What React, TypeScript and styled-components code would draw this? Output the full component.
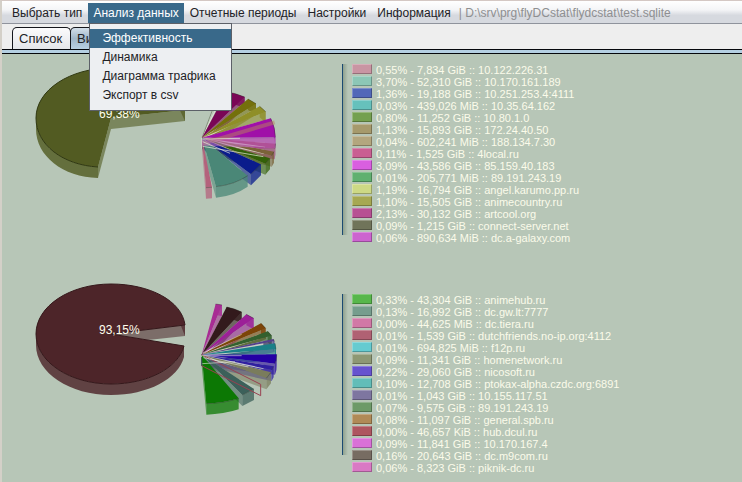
import React from "react";
import styled, { createGlobalStyle } from "styled-components";

const GlobalStyle = createGlobalStyle`
  * { box-sizing: border-box; }
  html, body, #root { height: 100%; }
  body {
    margin: 0;
    background: #b7c6b7;
    font-family: "Liberation Sans", Arial, sans-serif;
    font-size: 12px;
    color: #222226;
    overflow: hidden;
  }
  button { font: inherit; color: inherit; border: 0; background: none; }
`;

const Window = styled.div`
  display: flex;
  flex-direction: column;
  min-height: 100%;
  border-left: 2px solid #d4d0c8;
  border-top: 1px solid #d4c8c4;
`;

const MenuBar = styled.nav`
  display: flex;
  align-items: stretch;
  gap: 1px;
  height: 23px;
  padding: 2px 5px 0;
  background: linear-gradient(#ffffff 0%, #f4f5f7 40%, #d6d9df 65%, #d6d9df 100%);
  border-bottom: 1px solid #8f939c;
`;

const MenuSlot = styled.div`
  position: relative;
  display: flex;
`;

const MenuButton = styled.button<{ $open?: boolean }>`
  padding: 0 5px;
  line-height: 20px;
  white-space: nowrap;
  background: ${(p) => (p.$open ? "#39698a" : "transparent")};
  color: ${(p) => (p.$open ? "#ffffff" : "inherit")};
`;

const FilePath = styled.span`
  padding-left: 2px;
  line-height: 20px;
  color: #8e8f91;
  white-space: nowrap;
`;

const Popup = styled.div`
  position: absolute;
  z-index: 2;
  top: 100%;
  left: 1px;
  display: flex;
  flex-direction: column;
  width: 143px;
  padding: 5px 0;
  background: #edeff2;
  border: 1px solid #5c6068;
`;

const PopupItem = styled.button<{ $active?: boolean }>`
  height: 19px;
  padding: 0 12px;
  line-height: 19px;
  text-align: left;
  white-space: nowrap;
  background: ${(p) => (p.$active ? "#39698a" : "transparent")};
  color: ${(p) => (p.$active ? "#ffffff" : "inherit")};
`;

const TabStrip = styled.div`
  display: flex;
  align-items: flex-end;
  height: 25px;
  padding-left: 10px;
  background: #eeeeee;
`;

const Tab = styled.button<{ $selected?: boolean }>`
  height: 22px;
  min-width: 59px;
  padding: 0 6px;
  font-size: 13px;
  line-height: 21px;
  text-align: left;
  border: 1px solid #14161c;
  border-bottom: 0;
  border-radius: 5px 5px 0 0;
  background: ${(p) =>
    p.$selected ? "linear-gradient(#d3dfea, #9fb6ca 50%, #b9d0e2)" : "linear-gradient(#fbfbfc, #e4e6ea)"};

  & + & { margin-left: -1px; min-width: 110px; }
`;

const TabRule = styled.div`
  height: 5px;
  background: #b4cfe2;
  border-top: 1px solid #05070c;
  border-bottom: 1px solid #05070c;
`;

const Report = styled.main`
  display: flex;
  flex-direction: column;
  gap: 46px;
  padding-top: 10px;
`;

const ChartRow = styled.section`
  display: flex;
  align-items: flex-start;
  height: 184px;
`;

const ChartArea = styled.div`
  flex: 0 0 340px;

  svg { overflow: visible; }
`;

const LegendRule = styled.div<{ $short?: boolean }>`
  flex: 0 0 6px;
  height: ${(p) => (p.$short ? 161 : 171)}px;
  margin-right: 4px;
  border-left: 1px solid #1b4a72;
  background: linear-gradient(90deg, #8fa18f, #b7c6b7);
`;

const Legend = styled.ul`
  margin: 0;
  padding: 0;
  list-style: none;
`;

const LegendRow = styled.li`
  display: flex;
  height: 12px;
  font-size: 11px;
  line-height: 13px;
  color: #fbfbea;
  white-space: nowrap;
`;

const Swatch = styled.span<{ $color: string }>`
  width: 20px;
  height: 10px;
  margin-right: 4px;
  background: ${(p) => p.$color};
  border: 1px solid;
  border-color: rgba(255, 255, 255, 0.25) rgba(0, 0, 0, 0.25) rgba(0, 0, 0, 0.25) rgba(255, 255, 255, 0.25);
`;

type Entry = [color: string, text: string];
type Point = [number, number];
type SliceData = { a: Point; b: Point; color: string; bow?: Point };

const firstLegend: Entry[] = [
  ["#c995a3", "0,55% - 7,834 GiB :: 10.122.226.31"],
  ["#8cc7b6", "3,70% - 52,310 GiB :: 10.170.161.189"],
  ["#5268b8", "1,36% - 19,188 GiB :: 10.251.253.4:4111"],
  ["#66c1bc", "0,03% - 439,026 MiB :: 10.35.64.162"],
  ["#74a04f", "0,80% - 11,252 GiB :: 10.80.1.0"],
  ["#a69a6c", "1,13% - 15,893 GiB :: 172.24.40.50"],
  ["#b3a67e", "0,04% - 602,241 MiB :: 188.134.7.30"],
  ["#c95f92", "0,11% - 1,525 GiB :: 4local.ru"],
  ["#d95fe0", "3,09% - 43,586 GiB :: 85.159.40.183"],
  ["#60b070", "0,01% - 205,771 MiB :: 89.191.243.19"],
  ["#cdd985", "1,19% - 16,794 GiB :: angel.karumo.pp.ru"],
  ["#a6a852", "1,10% - 15,505 GiB :: animecountry.ru"],
  ["#b75093", "2,13% - 30,132 GiB :: artcool.org"],
  ["#70745a", "0,09% - 1,215 GiB :: connect-server.net"],
  ["#cc64cf", "0,06% - 890,634 MiB :: dc.a-galaxy.com"],
];

const secondLegend: Entry[] = [
  ["#57b74b", "0,33% - 43,304 GiB :: animehub.ru"],
  ["#769d8d", "0,13% - 16,992 GiB :: dc.gw.lt:7777"],
  ["#d178a6", "0,00% - 44,625 MiB :: dc.tiera.ru"],
  ["#b06173", "0,01% - 1,539 GiB :: dutchfriends.no-ip.org:4112"],
  ["#65cbd0", "0,01% - 694,825 MiB :: f12p.ru"],
  ["#8d9874", "0,09% - 11,341 GiB :: homenetwork.ru"],
  ["#6653cf", "0,22% - 29,060 GiB :: nicosoft.ru"],
  ["#62bdb8", "0,10% - 12,708 GiB :: ptokax-alpha.czdc.org:6891"],
  ["#7e76a0", "0,01% - 1,043 GiB :: 10.155.117.51"],
  ["#6d9a68", "0,07% - 9,575 GiB :: 89.191.243.19"],
  ["#b08a57", "0,08% - 11,097 GiB :: general.spb.ru"],
  ["#ae5560", "0,00% - 46,657 KiB :: hub.dcul.ru"],
  ["#d971d7", "0,09% - 11,841 GiB :: 10.170.167.4"],
  ["#776c62", "0,16% - 20,643 GiB :: dc.m9com.ru"],
  ["#d979c4", "0,06% - 8,323 GiB :: piknik-dc.ru"],
];

const firstSlices: SliceData[] = [
  { a: [140, 50], b: [194, 66], color: "#7a0656", bow: [168, 55] },
  { a: [204, 72], b: [228, 86], color: "#74700b" },
  { a: [239, 94], b: [257, 110], color: "#8f8f28" },
  { a: [272, 130], b: [286, 187], color: "#a010a8", bow: [286, 158] },
  { a: [286, 206], b: [284, 220], color: "#982468" },
  { a: [282, 230], b: [275, 242], color: "#7a6238" },
  { a: [270, 250], b: [256, 266], color: "#336008" },
  { a: [243, 268], b: [213, 298], color: "#0a1c8c" },
  { a: [203, 302], b: [108, 335], color: "#4a8777", bow: [164, 329] },
  { a: [96, 337], b: [78, 338], color: "#b4627c" },
];

const secondSlices: SliceData[] = [
  { a: [92, 27], b: [111, 30], color: "#a82c94" },
  { a: [125, 36], b: [170, 51], color: "#331a1c", bow: [150, 41] },
  { a: [184, 58], b: [206, 70], color: "#9c2098" },
  { a: [228, 85], b: [242, 100], color: "#7c4408" },
  { a: [248, 109], b: [260, 122], color: "#34602e" },
  { a: [265, 132], b: [268, 139], color: "#54408c" },
  { a: [270, 145], b: [273, 163], color: "#1a8088" },
  { a: [275, 178], b: [270, 206], color: "#2400a4", bow: [276, 194] },
  { a: [266, 214], b: [260, 225], color: "#3020a0" },
  { a: [258, 232], b: [244, 250], color: "#7a7c5c" },
  { a: [207, 282], b: [172, 300], color: "#3c605a" },
  { a: [161, 310], b: [64, 326], color: "#0c7804", bow: [116, 325] },
];

const DEPTH = 33;

const bowOf = ({ a, b, bow }: SliceData): Point => bow ?? [(a[0] + b[0]) / 2, (a[1] + b[1]) / 2];

function SliceSides({ centre, slice }: { centre: Point; slice: SliceData }) {
  const [cx, cy] = centre;
  const { a, b, color } = slice;
  const m = bowOf(slice);
  return (
    <g fill={color}>
      <path d={`M${cx} ${cy}L${b[0]} ${b[1]}v${DEPTH}L${cx} ${cy + DEPTH}Z`} opacity=".55" />
      <path
        d={`M${a[0]} ${a[1]}Q${m[0]} ${m[1]} ${b[0]} ${b[1]}v${DEPTH}Q${m[0]} ${m[1] + DEPTH} ${a[0]} ${a[1] + DEPTH}Z`}
        opacity=".75"
      />
    </g>
  );
}

function SliceTop({ centre, slice }: { centre: Point; slice: SliceData }) {
  const [cx, cy] = centre;
  const { a, b, color } = slice;
  const m = bowOf(slice);
  return (
    <g>
      <path d={`M${cx} ${cy}L${a[0]} ${a[1]}Q${m[0]} ${m[1]} ${b[0]} ${b[1]}Z`} fill={color} />
      <path
        d={`M${a[0]} ${a[1]}Q${m[0]} ${m[1]} ${b[0]} ${b[1]}`}
        fill="none"
        stroke="#202820"
        strokeOpacity=".5"
        strokeWidth="2"
      />
    </g>
  );
}

function SliceFan({ centre, slices }: { centre: Point; slices: SliceData[] }) {
  const [cx, cy] = centre;
  return (
    <g>
      {slices.map((s) => (
        <SliceSides key={s.color} centre={centre} slice={s} />
      ))}
      <g fill="#e2e8d8" opacity=".8">
        {slices.slice(0, -2).map((s, i) => {
          const next = slices[i + 1].a;
          const x = cx + (next[0] - cx) * 0.86;
          const y = cy + (next[1] - cy) * 0.86;
          return <path key={s.color} d={`M${cx} ${cy + 2}L${x} ${y}v13L${cx} ${cy + 7}Z`} />;
        })}
      </g>
      {slices.map((s) => (
        <SliceTop key={s.color} centre={centre} slice={s} />
      ))}
    </g>
  );
}

function TrafficChart() {
  const centre: Point = [66, 188];
  return (
    <svg width="340" height="184" viewBox="2 64 340 184" display="block" role="img" aria-label="69,38%">
      <g fill="#525b22">
        <path d="M36 118C36 145 63 165 98 167V178C63 177 36 156 36 129Z" opacity=".82" />
        <path d="M111 118L185 110V121L111 129Z" opacity=".6" />
        <path d="M180 110.500H185V121Z" opacity=".7" />
        <path d="M111 118L98 167V178L111 129Z" opacity=".6" />
        <path d="M111 118L98 167C63 165 36 145 36 118C36 90 70 68 111 68C150 68 182 86 185 110Z" />
      </g>
      <path d="M98 167C63 165 36 145 36 118C36 90 70 68 111 68" fill="none" stroke="#303812" />
      <text x="99" y="118" fontSize="12" fill="#ffffee">69,38%</text>
      <g transform="translate(180 75) scale(.33333)">
        <path d="M66 188L98 106H106L66 188V220L108 138" fill="none" stroke="#e0e6d6" strokeWidth="3" />
        <path d="M66 188L98 104" fill="none" stroke="#50604a" strokeWidth="2" />
        <SliceFan centre={centre} slices={firstSlices} />
        <path d="M68 206L284 142" stroke="#b5835c" strokeOpacity=".5" strokeWidth="12" />
        <path d="M66 192L285 190V219L66 212Z" fill="#c070b8" fillOpacity=".6" />
        <path d="M68 192L180 190M68 214L250 245M68 200L150 235" stroke="#e6ead8" strokeOpacity=".7" strokeWidth="3" />
      </g>
    </svg>
  );
}

function ShareChart() {
  const centre: Point = [50, 179];
  return (
    <svg width="340" height="184" viewBox="2 294 340 184" display="block" role="img" aria-label="93,15%">
      <g fill="#4d2529">
        <path d="M36 334C36 362 70 384 111 384C148 384 178 368 184 346V357C178 379 148 395 111 395C70 395 36 373 36 345Z" opacity=".82" />
        <path d="M111 334L185 325V336L148 340Z" opacity=".55" />
        <path d="M181 326L185 325V336Z" opacity=".7" />
        <path
          d="M111 334L184 346C178 368 148 384 111 384C70 384 36 362 36 334C36 306 70 284 111 284C150 284 182 301 185 325Z"
          stroke="#35181b"
        />
      </g>
      <text x="99" y="334" fontSize="12" fill="#ffffee">93,15%</text>
      <g transform="translate(185 295) scale(.33333)">
        <SliceFan centre={centre} slices={secondSlices} />
        <path d="M50 179L227 268V302L50 212" fill="none" stroke="#984050" strokeWidth="3" />
        <path d="M52 182L170 182M55 188L190 216M52 206L150 200M54 174L170 118" stroke="#e6ead8" strokeOpacity=".6" strokeWidth="3" />
      </g>
    </svg>
  );
}

function LegendList({ entries }: { entries: Entry[] }) {
  return (
    <Legend>
      {entries.map(([color, text]) => (
        <LegendRow key={text}>
          <Swatch $color={color} />
          {text}
        </LegendRow>
      ))}
    </Legend>
  );
}

export default function App() {
  return (
    <>
      <GlobalStyle />
      <Window>
        <MenuBar>
          <MenuButton>Выбрать тип</MenuButton>
          <MenuSlot>
            <MenuButton $open aria-haspopup="menu" aria-expanded="true">Анализ данных</MenuButton>
            <Popup role="menu">
              <PopupItem role="menuitem" $active>Эффективность</PopupItem>
              <PopupItem role="menuitem">Динамика</PopupItem>
              <PopupItem role="menuitem">Диаграмма трафика</PopupItem>
              <PopupItem role="menuitem">Экспорт в csv</PopupItem>
            </Popup>
          </MenuSlot>
          <MenuButton>Отчетные периоды</MenuButton>
          <MenuButton>Настройки</MenuButton>
          <MenuButton>Информация</MenuButton>
          <FilePath>| D:\srv\prg\flyDCstat\flydcstat\test.sqlite</FilePath>
        </MenuBar>
        <TabStrip role="tablist">
          <Tab role="tab" aria-selected="false">Список</Tab>
          <Tab role="tab" aria-selected="true" $selected>Вид</Tab>
        </TabStrip>
        <TabRule />
        <Report>
          <ChartRow>
            <ChartArea><TrafficChart /></ChartArea>
            <LegendRule />
            <LegendList entries={firstLegend} />
          </ChartRow>
          <ChartRow>
            <ChartArea><ShareChart /></ChartArea>
            <LegendRule $short />
            <LegendList entries={secondLegend} />
          </ChartRow>
        </Report>
      </Window>
    </>
  );
}
